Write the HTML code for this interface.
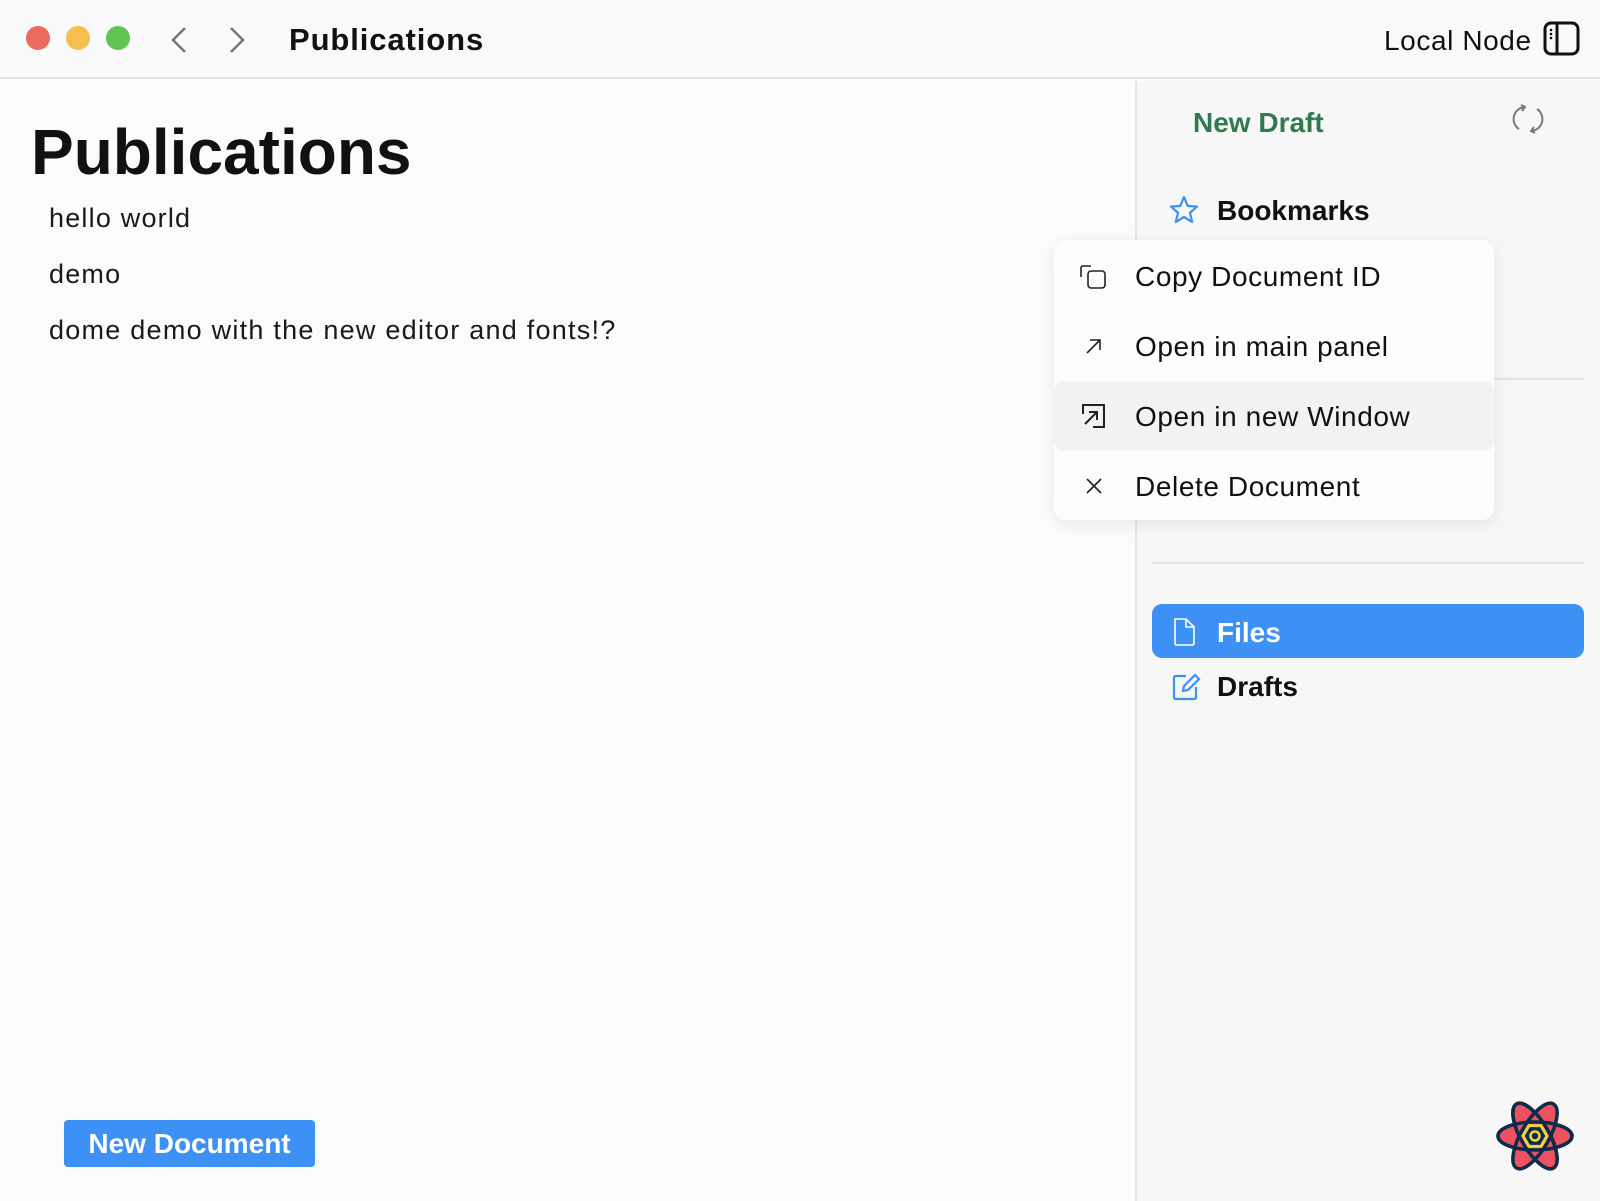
<!DOCTYPE html>
<html><head><meta charset="utf-8"><style>
*{margin:0;padding:0;box-sizing:border-box}
body{width:1600px;height:1200px;background:#fbfbfb;font-family:"Liberation Sans",sans-serif;color:#111;position:relative;overflow:hidden}
.a{position:absolute;white-space:nowrap}
.m{font-size:28px;letter-spacing:0.6px}
</style></head><body>
<div class="a" style="left:0;top:0;width:1600px;height:79px;background:#f9f9f9;border-bottom:2px solid #e2e2e2"></div>
<div class="a" style="left:26px;top:26px;width:24px;height:24px;border-radius:50%;background:#ec6a5e"></div>
<div class="a" style="left:66px;top:26px;width:24px;height:24px;border-radius:50%;background:#f4bf4f"></div>
<div class="a" style="left:106px;top:26px;width:24px;height:24px;border-radius:50%;background:#61c554"></div>
<svg class="a" style="left:165px;top:24px" width="90" height="32"><path d="M20 4 L8 16 L20 28" fill="none" stroke="#777" stroke-width="2.5"/><path d="M66 4 L78 16 L66 28" fill="none" stroke="#777" stroke-width="2.5"/></svg>
<div class="a" style="left:289px;top:22px;font-size:31px;font-weight:bold;letter-spacing:0.9px">Publications</div>
<div class="a" style="left:1384px;top:25px;font-size:28px;letter-spacing:0.6px">Local Node</div>
<svg class="a" style="left:1543px;top:21px" width="38" height="36"><rect x="2" y="2" width="33" height="31" rx="6" fill="none" stroke="#111" stroke-width="3"/><line x1="14" y1="2" x2="14" y2="33" stroke="#111" stroke-width="3"/><circle cx="8" cy="9" r="1.3"/><circle cx="8" cy="13" r="1.3"/><circle cx="8" cy="17" r="1.3"/></svg>
<div class="a" style="left:0;top:81px;width:1135px;height:1120px;background:#fbfbfb"></div>
<div class="a" style="left:1135px;top:81px;width:465px;height:1120px;background:#f7f7f7;border-left:2px solid #e4e4e4"></div>
<div class="a" style="left:31px;top:115px;font-size:64px;font-weight:bold;letter-spacing:0px">Publications</div>
<div class="a" style="left:49px;top:203px;font-size:27px;color:#1a1a1a;letter-spacing:1.2px">hello world</div>
<div class="a" style="left:49px;top:259px;font-size:27px;color:#1a1a1a;letter-spacing:1.2px">demo</div>
<div class="a" style="left:49px;top:315px;font-size:27px;color:#1a1a1a;letter-spacing:1.25px">dome demo with the new editor and fonts!?</div>
<div class="a" style="left:64px;top:1120px;width:251px;height:47px;background:#3d91f5;border-radius:4px;color:#fff;font-size:28px;font-weight:bold;text-align:center;line-height:47px">New Document</div>
<div class="a" style="left:1193px;top:107px;font-size:28px;font-weight:bold;color:#2f7a4f">New Draft</div>
<svg class="a" style="left:1511px;top:102px" width="34" height="34" fill="none" stroke="#777" stroke-width="2"><path d="M8 27 A12 12 0 0 1 14 5"/><path d="M10 3 L14 5 L11 9"/><path d="M26 7 A12 12 0 0 1 20 29"/><path d="M24 31 L20 29 L23 25"/></svg>
<svg class="a" style="left:1168px;top:194px" width="32" height="32"><path d="M16 3 L19.8 12 L29 12.6 L22 18.8 L24.2 28 L16 23 L7.8 28 L10 18.8 L3 12.6 L12.2 12 Z" fill="none" stroke="#3d91f5" stroke-width="2.2" stroke-linejoin="round"/></svg>
<div class="a" style="left:1217px;top:195px;font-size:28px;font-weight:bold">Bookmarks</div>
<div class="a" style="left:1152px;top:378px;width:432px;height:2px;background:#e2e2e2"></div>
<div class="a" style="left:1152px;top:562px;width:432px;height:2px;background:#e2e2e2"></div>
<div class="a" style="left:1054px;top:240px;width:440px;height:280px;background:#fcfcfc;border-radius:12px;box-shadow:0 4px 20px rgba(0,0,0,.08)"></div>
<div class="a" style="left:1054px;top:381px;width:440px;height:70px;background:#f2f2f2;border-radius:10px"></div>
<svg class="a" style="left:1078px;top:260px" width="34" height="34" fill="none" stroke="#222" stroke-width="1.6"><path d="M13 6 H5 Q3 6 3 8 V17"/><rect x="10" y="11" width="17" height="17" rx="3"/></svg>
<svg class="a" style="left:1082px;top:334px" width="24" height="24" fill="none" stroke="#222" stroke-width="1.6"><path d="M5 19 L18 6 M8 6 H18 V16"/></svg>
<svg class="a" style="left:1080px;top:402px" width="28" height="28" fill="none" stroke="#222" stroke-width="2"><path d="M13 3 H24 V25 H13 M3 12 V3 H13"/><path d="M5 22 L17 10 M9 10 H17 V18"/></svg>
<svg class="a" style="left:1084px;top:476px" width="20" height="20" fill="none" stroke="#222" stroke-width="1.6"><path d="M3 3 L17 17 M17 3 L3 17"/></svg>
<div class="a m" style="left:1135px;top:261px">Copy Document ID</div>
<div class="a m" style="left:1135px;top:331px">Open in main panel</div>
<div class="a m" style="left:1135px;top:401px">Open in new Window</div>
<div class="a m" style="left:1135px;top:471px">Delete Document</div>
<div class="a" style="left:1152px;top:604px;width:432px;height:54px;background:#3d91f5;border-radius:10px"></div>
<svg class="a" style="left:1171px;top:616px" width="28" height="32" fill="none" stroke="#fff" stroke-width="1.6"><path d="M4 3 H15 L23 11 V27 Q23 29 21 29 H6 Q4 29 4 27 Z M15 3 V11 H23"/></svg>
<div class="a" style="left:1217px;top:617px;font-size:28px;font-weight:bold;color:#fff">Files</div>
<svg class="a" style="left:1171px;top:671px" width="32" height="32" fill="none" stroke="#3d91f5" stroke-width="2.2"><path d="M15 5 H5 Q3 5 3 7 V26 Q3 28 5 28 H23 Q25 28 25 26 V16"/><path d="M12 20 L13 15 L24 4 L28 8 L17 19 Z"/></svg>
<div class="a" style="left:1217px;top:671px;font-size:28px;font-weight:bold">Drafts</div>
<svg class="a" style="left:1495px;top:1098px" width="80" height="76" viewBox="-40 -38 80 76">
<g fill="#ee5261" stroke="#0d2b4a" stroke-width="3.5">
<ellipse rx="37" ry="14"/><ellipse rx="37" ry="14" transform="rotate(60)"/><ellipse rx="37" ry="14" transform="rotate(-60)"/>
<ellipse rx="37" ry="14" fill="none" transform="rotate(60)"/><ellipse rx="37" ry="14" fill="none"/>
</g>
<polygon points="12,0 6,10.4 -6,10.4 -12,0 -6,-10.4 6,-10.4" fill="#0d2b4a" stroke="#f5d143" stroke-width="3"/>
<circle r="4.5" fill="none" stroke="#f5d143" stroke-width="2.5"/>
</svg>
</body></html>
